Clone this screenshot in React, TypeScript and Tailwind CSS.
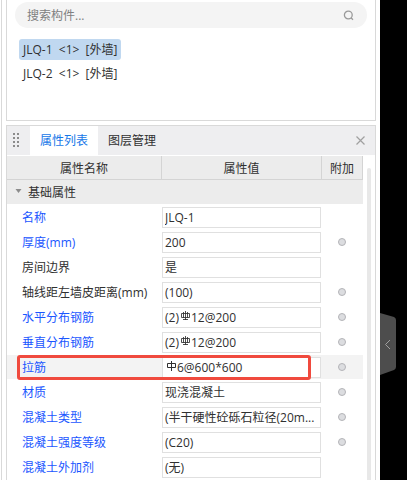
type Property = {
  name: string;
  value: string;
  prefix?: string;
  symbol?: "plain" | "ribbed";
  required?: boolean;
  extra?: boolean;
  active?: boolean;
};

const components = ["JLQ-1  <1>  [外墙]", "JLQ-2  <1>  [外墙]"];

const properties: Property[] = [
  { name: "名称", value: "JLQ-1", required: true },
  { name: "厚度(mm)", value: "200", required: true, extra: true },
  { name: "房间边界", value: "是" },
  { name: "轴线距左墙皮距离(mm)", value: "(100)", extra: true },
  { name: "水平分布钢筋", prefix: "(2)", symbol: "ribbed", value: "12@200", required: true, extra: true },
  { name: "垂直分布钢筋", prefix: "(2)", symbol: "ribbed", value: "12@200", required: true, extra: true },
  { name: "拉筋", symbol: "plain", value: "6@600*600", required: true, extra: true, active: true },
  { name: "材质", value: "现浇混凝土", required: true, extra: true },
  { name: "混凝土类型", value: "(半干硬性砼砾石粒径(20m...", required: true, extra: true },
  { name: "混凝土强度等级", value: "(C20)", required: true, extra: true },
  { name: "混凝土外加剂", value: "(无)", required: true },
];

// rebar grade marks: plain bar and ribbed bar
function RebarIcon({ type }: { type: "plain" | "ribbed" }) {
  return (
    <svg
      width="9"
      height="10"
      viewBox="0 0 9 10"
      fill="none"
      stroke="currentColor"
      className="mr-px mb-1 ml-0.5 shrink-0"
      aria-hidden
    >
      {type === "plain" ? (
        <path d="M0.5 2.5h8v4h-8zM4.500 0v10" />
      ) : (
        <path d="M0.5 2.5h8v4h-8zM2.5 1v6M6.5 1v6M4.500 0v9M2 8.500h5" strokeOpacity="0.85" />
      )}
    </svg>
  );
}

function PropertyRow({ item }: { item: Property }) {
  return (
    <tr className={`relative h-[25px] ${item.active ? "bg-[#f3f3f3]" : ""}`}>
      <td className="border-b border-white pt-0.5 pl-[15px]">
        <label
          htmlFor={item.name}
          className={`block whitespace-nowrap ${item.required ? "text-[#1a56ff]" : ""}`}
        >
          {item.name}
        </label>
        {item.active && (
          <span className="pointer-events-none absolute top-0 bottom-0 left-2.5 right-[52px] z-10 rounded-[3px] border-3 border-[#f04a3e]" />
        )}
      </td>
      <td className="border-b border-white pt-px pr-px">
        <div className="flex h-[21px] items-center border border-[#e0e0e0] bg-white pt-px pl-0.5">
          {item.prefix && <span>{item.prefix}</span>}
          {item.symbol && <RebarIcon type={item.symbol} />}
          <input
            id={item.name}
            defaultValue={item.value}
            className="w-full min-w-0 bg-transparent outline-none"
          />
        </div>
      </td>
      <td className="border-b border-white pr-0.5">
        {item.extra && (
          <button
            type="button"
            aria-label="附加"
            className="mx-auto block size-2 rounded-full border border-[#b4b4b8] bg-[#dcdde0]"
          />
        )}
      </td>
    </tr>
  );
}

function ComponentPanel() {
  return (
    <section className="border-x border-b border-[#d9d9d9] px-2 pt-0.5 pb-9">
      <div className="flex h-[26px] items-center rounded-full bg-[#f4f4f4] pr-3 pl-3">
        <input
          type="text"
          aria-label="搜索构件"
          placeholder="搜索构件..."
          className="min-w-0 flex-1 bg-transparent pt-0.5 outline-none placeholder:text-[#808080]"
        />
        <button type="button" aria-label="搜索">
          <svg width="12" height="12" viewBox="0 0 12 12" fill="none" stroke="#999" strokeWidth="1.3">
            <circle cx="5.300" cy="6" r="3.900" />
            <path d="M8 8.800l2 2" />
          </svg>
        </button>
      </div>
      <ul className="mt-[11px] flex flex-col items-start gap-[3px] pl-1">
        {components.map((name, index) => (
          <li key={name}>
            <button
              type="button"
              className={`block h-[21px] rounded-[3px] px-1 whitespace-pre ${index === 0 ? "bg-[#c0d8f0]" : ""}`}
            >
              {name}
            </button>
          </li>
        ))}
      </ul>
    </section>
  );
}

function PropertyPanel() {
  return (
    <section className="flex min-h-0 flex-1 flex-col border-x border-t border-[#d9d9d9]">
      <header className="flex h-[29px] shrink-0 items-center bg-[#eeeef0]">
        <div className="flex w-[23px] justify-center pr-1">
          <svg width="7" height="15" viewBox="0 0 7 15" fill="#8c8c8c" aria-hidden>
            {[0, 4, 8, 12].map((y) => (
              <g key={y}>
                <rect x="0" y={y} width="2" height="2" />
                <rect x="4" y={y} width="2" height="2" />
              </g>
            ))}
          </svg>
        </div>
        <button type="button" className="h-full bg-white px-2.5 text-[#1677e8]">
          属性列表
        </button>
        <button type="button" className="h-full px-2.5">
          图层管理
        </button>
        <button type="button" aria-label="关闭" className="mr-2.5 ml-auto">
          <svg width="9" height="9" viewBox="0 0 9 9" stroke="#a0a0a0" strokeWidth="1.2">
            <path d="M0.5 0.5l8 8M8.5 0.5l-8 8" />
          </svg>
        </button>
      </header>

      <div className="mt-px flex min-h-0 flex-1 overflow-hidden">
        <div className="min-w-0 flex-1">
          <table className="w-full table-fixed border-separate border-spacing-0">
            <colgroup>
              <col className="w-[155px]" />
              <col />
              <col className="w-[41px]" />
            </colgroup>
            <thead>
              <tr className="h-6 bg-[#ececec]">
                <th className="border-r border-b border-[#d4d4d4] pt-0.5 font-normal">属性名称</th>
                <th className="border-r border-b border-[#d4d4d4] pt-0.5 font-normal">属性值</th>
                <th className="border-r border-b border-[#d4d4d4] pt-0.5 font-normal">附加</th>
              </tr>
            </thead>
            <tbody>
              <tr className="h-[25px]">
                <th colSpan={3} className="border-b border-white bg-[#ececec] pt-0.5 pl-2 text-left font-normal">
                  <button type="button" className="flex items-center gap-1.5">
                    <svg width="7" height="4" viewBox="0 0 7 4" fill="#8c8c8c" className="mb-1" aria-hidden>
                      <path d="M0.5 0h6L3.5 4z" />
                    </svg>
                    基础属性
                  </button>
                </th>
              </tr>
              {properties.map((item) => (
                <PropertyRow key={item.name} item={item} />
              ))}
            </tbody>
          </table>
        </div>
        <div className="mt-3 mr-1 ml-1 w-1 shrink-0 rounded-t-full bg-[#e8e8e8]" />
      </div>
    </section>
  );
}

function App() {
  return (
    <div className="flex h-screen overflow-hidden bg-white font-['Open_Sans','Noto_Sans_CJK_SC',sans-serif] text-xs text-[#303030]">
      <main className="ml-px flex min-w-0 flex-1 flex-col gap-1 border-l border-[#d9d9d9] px-1">
        <ComponentPanel />
        <PropertyPanel />
      </main>
      <aside className="w-[27px] shrink-0 bg-black pt-[313px]">
        <button type="button" aria-label="收起" className="block">
          <svg width="16" height="62" viewBox="0 0 16 62" fill="none">
            <path d="M0 0l14 4q2 1 2 3v47q0 2-2 3L0 62z" fill="#4d4d4d" />
            <path d="M10 27l-4.500 4.500 4.500 4.500" stroke="#a0a0a0" />
          </svg>
        </button>
      </aside>
    </div>
  );
}

export default App;
